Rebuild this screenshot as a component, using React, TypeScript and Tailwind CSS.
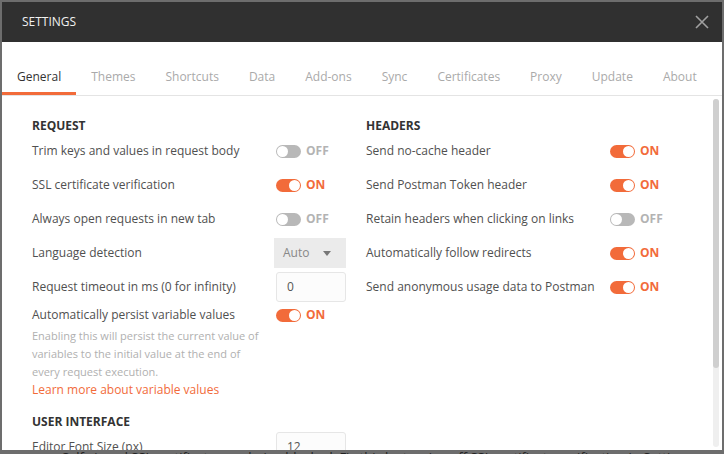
const tabs = ["General", "Themes", "Shortcuts", "Data", "Add-ons", "Sync", "Certificates", "Proxy", "Update", "About"];

function Toggle({ on }: { on: boolean }) {
  return (
    <div className="flex items-center">
      <div
        className={
          "relative h-[13px] w-[25px] rounded-full " + (on ? "bg-[#f26b3a]" : "bg-[#b8b8b8]")
        }
      >
        <div
          className={
            "absolute top-[1px] h-[11px] w-[11px] rounded-full bg-white " +
            (on ? "right-[1px]" : "left-[1px]")
          }
        />
      </div>
      <span
        className={
          "ml-[5px] text-[12px] font-bold " + (on ? "text-[#f26b3a]" : "text-[#b3b3b3]")
        }
      >
        {on ? "ON" : "OFF"}
      </span>
    </div>
  );
}

function Row({ label, children, tall = true }: { label: string; children: React.ReactNode; tall?: boolean }) {
  return (
    <div className={"flex items-center " + (tall ? "h-[34px]" : "h-[22px]")}>
      <div className="w-[244px] shrink-0 text-[#505050]">{label}</div>
      {children}
    </div>
  );
}

function Heading({ children, className = "" }: { children: React.ReactNode; className?: string }) {
  return <div className={"h-[17px] leading-[17px] font-bold text-[#333] " + className}>{children}</div>;
}

export default function App() {
  return (
    <div
      className="relative h-[454px] w-[724px] overflow-hidden bg-[#6d6d6d] text-[12px]"
      style={{ fontFamily: '"Open Sans", sans-serif' }}
    >
      {/* page behind the dialog */}
      <div className="absolute left-[47px] top-[448px] flex items-center gap-[10px] text-[13px] text-[#222]">
        <span>•</span>
        <span>Self-signed SSL certificates are being blocked. Fix this by turning off SSL certificate verification in Settings &gt; General</span>
      </div>

      <div className="absolute left-[2px] top-[2px] flex h-[448px] w-[720px] flex-col bg-white">
        <div className="flex h-[40px] shrink-0 items-center justify-between bg-[#303030] pl-[20px] pr-[13px]">
          <span className="text-[12px] text-[#f0f0f0]">SETTINGS</span>
          <svg width="14" height="14" viewBox="0 0 14 14" className="text-[#a0a0a0]">
            <path d="M1 1L13 13M13 1L1 13" stroke="currentColor" strokeWidth="1.6" />
          </svg>
        </div>

        <div className="flex h-[54px] shrink-0 items-end border-b border-[#e4e4e4]">
          {tabs.map((t, i) => (
            <div
              key={t}
              className={
                "flex h-[38px] items-center px-[15px] text-[12px] " +
                (i === 0 ? "border-b-[3px] border-[#f26b3a] pt-[5px] text-[#333]" : "pt-[2px] text-[#aaa]")
              }
            >
              {t}
            </div>
          ))}
        </div>

        <div className="relative flex-1 overflow-hidden">
          <div className="grid grid-cols-[334px_1fr] pl-[30px] pt-[21px]">
            <div>
              <Heading>REQUEST</Heading>
              <Row label="Trim keys and values in request body">
                <Toggle on={false} />
              </Row>
              <Row label="SSL certificate verification">
                <Toggle on />
              </Row>
              <Row label="Always open requests in new tab">
                <Toggle on={false} />
              </Row>
              <Row label="Language detection">
                <div className="-ml-[2px] flex h-[30px] w-[72px] items-center justify-between bg-[#ebebeb] pl-[9px] pr-[15px] text-[#888]">
                  <span>Auto</span>
                  <svg width="8" height="5" viewBox="0 0 8 5">
                    <path d="M0 0H8L4 5Z" fill="#777" />
                  </svg>
                </div>
              </Row>
              <Row label="Request timeout in ms (0 for infinity)">
                <div className="flex h-[30px] w-[70px] items-center rounded-[3px] border border-[#e6e6e6] bg-[#fcfcfc] pl-[10px] text-[#555]">
                  0
                </div>
              </Row>
              <Row label="Automatically persist variable values" tall={false}>
                <Toggle on />
              </Row>
              <div className="mt-[1px] whitespace-nowrap text-[11px] leading-[18px] text-[#b0b0b0]">
                <div>Enabling this will persist the current value of</div>
                <div>variables to the initial value at the end of</div>
                <div>every request execution.</div>
              </div>
              <div className="leading-[18px] text-[#f26b3a]">Learn more about variable values</div>
              <Heading className="mt-[14px]">USER INTERFACE</Heading>
              <Row label="Editor Font Size (px)">
                <div className="flex h-[30px] w-[70px] items-center rounded-[3px] border border-[#e6e6e6] bg-[#fcfcfc] pl-[10px] text-[#555]">
                  12
                </div>
              </Row>
            </div>
            <div>
              <Heading>HEADERS</Heading>
              <Row label="Send no-cache header">
                <Toggle on />
              </Row>
              <Row label="Send Postman Token header">
                <Toggle on />
              </Row>
              <Row label="Retain headers when clicking on links">
                <Toggle on={false} />
              </Row>
              <Row label="Automatically follow redirects">
                <Toggle on />
              </Row>
              <Row label="Send anonymous usage data to Postman">
                <Toggle on />
              </Row>
            </div>
          </div>

          <div className="absolute right-[3px] top-[3px] h-[348px] w-[6px] rounded-[3px] bg-[#efefef]">
            <div className="h-[269px] w-[6px] rounded-[3px] bg-[#cfcfcf]" />
          </div>
        </div>
      </div>
    </div>
  );
}
